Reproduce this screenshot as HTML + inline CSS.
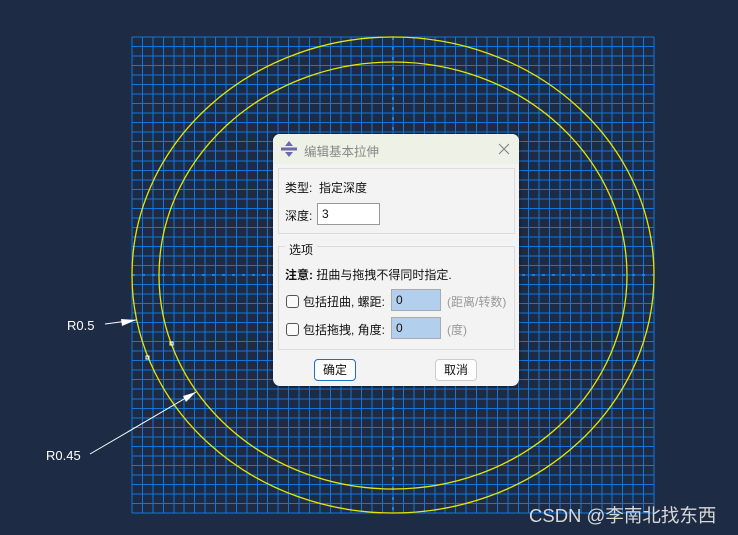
<!DOCTYPE html>
<html><head><meta charset="utf-8"><style>
body{margin:0;width:738px;height:535px;background:#1d2b45;position:relative;overflow:hidden;font-family:"Liberation Sans","Noto Sans CJK SC",sans-serif;}
.dlg{position:absolute;left:273px;top:134px;width:246px;height:252px;background:#f3f3f3;border-radius:7px;box-shadow:0 0 4px rgba(0,0,0,.4);font-size:12px;color:#111;}
.tb{position:absolute;left:0;top:0;width:246px;height:30px;background:#eef2e6;border-radius:7px 7px 0 0;}
.abs{position:absolute;}
.box{position:absolute;border:1px solid #dcdcdc;}
.inp{position:absolute;border:1px solid #999;background:#fff;height:22px;box-sizing:border-box;padding:3px 0 0 4px;font-size:12px;}
.blue{background:#b3cfee;border-color:#aaa;}
.cb{position:absolute;width:11px;height:11px;border:1px solid #555;border-radius:3px;background:#fafafa;}
.btn{position:absolute;height:22px;box-sizing:border-box;border:1px solid #ccc;background:#fdfdfd;border-radius:4px;text-align:center;line-height:20px;font-size:12px;}
.gray{color:#999;}
</style></head><body>
<svg class="abs" style="left:0;top:0" width="738" height="535">
<g stroke="#1177dd" stroke-width="1" shape-rendering="crispEdges" id="g"></g>
<line x1="393" y1="37" x2="393" y2="513" stroke="#1a7fe6" stroke-width="2" stroke-dasharray="3,7"/>
<line x1="132" y1="275" x2="654" y2="275" stroke="#1a7fe6" stroke-width="2" stroke-dasharray="3,7"/>
<ellipse cx="393" cy="275" rx="261" ry="238" fill="none" stroke="#e6e600" stroke-width="1.3"/>
<ellipse cx="393" cy="275.5" rx="234" ry="213.5" fill="none" stroke="#e6e600" stroke-width="1.3"/>
<rect x="146" y="356" width="3" height="3" fill="none" stroke="#fff"/>
<rect x="170" y="342" width="3" height="3" fill="none" stroke="#fff"/>
<line x1="105" y1="324" x2="136" y2="320" stroke="#fff"/>
<polygon points="136,320 121,319 122,326" fill="#fff"/>
<line x1="90" y1="454" x2="196" y2="392" stroke="#fff"/>
<polygon points="196,392 183,396 186,402" fill="#fff"/>
<text x="67" y="330" fill="#fff" font-size="13" font-family="Liberation Sans">R0.5</text>
<text x="46" y="460" fill="#fff" font-size="13" font-family="Liberation Sans">R0.45</text>
<text x="529" y="522" fill="#d8d8d8" font-size="18.5" font-family="Liberation Sans,Noto Sans CJK SC,sans-serif">CSDN @李南北找东西</text>
</svg>
<script>
var g=document.getElementById('g'),s='';
for(var i=0;i<=50;i++){var x=132+i*10.44,y=37+i*9.52;
s+='<line x1="'+x+'" y1="37" x2="'+x+'" y2="513"/><line x1="132" y1="'+y+'" x2="654" y2="'+y+'"/>';}
g.innerHTML=s;
</script>
<div class="dlg">
<div class="tb"></div>
<svg class="abs" style="left:8px;top:7px" width="16" height="16"><polygon points="8,0 12,5 4,5" fill="#6a6aa8"/><polygon points="8,16 12,11 4,11" fill="#6a6aa8"/><rect x="0" y="6.5" width="16" height="3" fill="#6a6aa8"/></svg>
<div class="abs" style="left:31px;top:7px;color:#888;font-size:12.5px">编辑基本拉伸</div>
<svg class="abs" style="left:225px;top:9px" width="12" height="12"><path d="M1,1L11,11M11,1L1,11" stroke="#888" stroke-width="1.2"/></svg>
<div class="box" style="left:5px;top:34px;width:235px;height:64px"></div>
<div class="abs" style="left:12px;top:45px">类型:&nbsp; 指定深度</div>
<div class="abs" style="left:12px;top:73px">深度:</div>
<div class="inp" style="left:44px;top:69px;width:63px;">3</div>
<div class="box" style="left:5px;top:112px;width:235px;height:102px"></div>
<div class="abs" style="left:12px;top:107px;background:#f3f3f3;padding:0 4px">选项</div>
<div class="abs" style="left:12px;top:132px;font-weight:bold">注意:&nbsp;<span style="font-weight:normal">扭曲与拖拽不得同时指定.</span></div>
<div class="cb" style="left:13px;top:161px"></div>
<div class="abs" style="left:30px;top:159px">包括扭曲, 螺距:</div>
<div class="inp blue" style="left:118px;top:155px;width:50px;">0</div>
<div class="abs gray" style="left:174px;top:159px">(距离/转数)</div>
<div class="cb" style="left:13px;top:189px"></div>
<div class="abs" style="left:30px;top:187px">包括拖拽, 角度:</div>
<div class="inp blue" style="left:118px;top:183px;width:50px;">0</div>
<div class="abs gray" style="left:174px;top:187px">(度)</div>
<div class="btn" style="left:41px;top:225px;width:42px;border-color:#1a6fc8">确定</div>
<div class="btn" style="left:162px;top:225px;width:42px">取消</div>
</div>
</body></html>
